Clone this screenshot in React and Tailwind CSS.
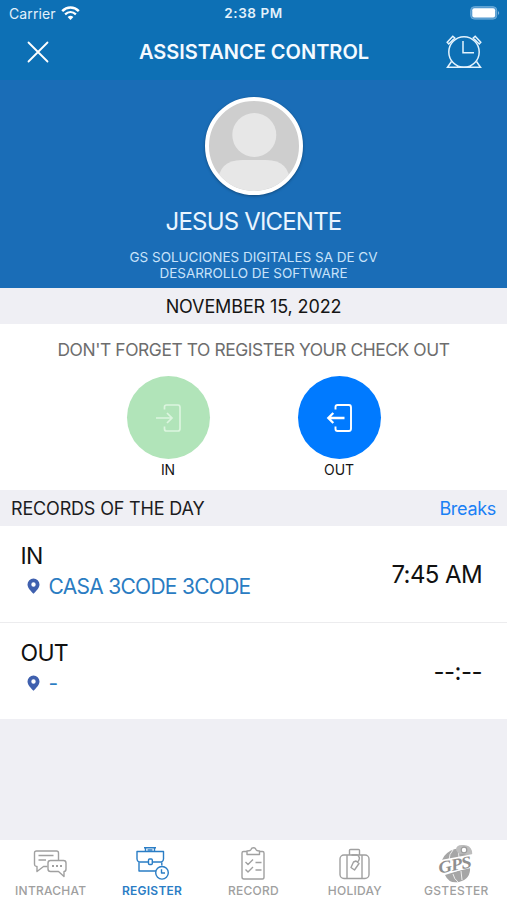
import React from 'react';

function StatusBar() {
  return (
    <div className="grid grid-cols-3 items-center h-[27px] px-[8px] text-[14px] leading-none text-[#e3f1fb]">
      <div className="flex items-center gap-[5px] pl-px">
        <span className="tracking-[0.1px]">Carrier</span>
        <svg width="19" height="15" viewBox="0 0 19 15" fill="none" stroke="#fff">
          <path d="M1.2 5.2 C6 .4 13 .4 17.8 5.2" strokeWidth="2.5" />
          <path d="M4.1 8.3 C7.3 5.3 11.7 5.3 14.9 8.3" strokeWidth="2.3" />
          <path d="M9.5 14 L6.6 11 Q9.5 8.6 12.4 11Z" fill="#fff" stroke="none" />
        </svg>
      </div>
      <span className="pt-px text-center text-[13.5px] font-semibold tracking-[0.55px]">2:38 PM</span>
      <svg className="justify-self-end -mt-px -mr-px" width="30" height="14" viewBox="0 0 30 14">
        <rect x=".7" y=".7" width="26" height="12.4" rx="3.6" fill="#4f97cf" stroke="#6fadd9" />
        <rect x="2.3" y="2.2" width="22.8" height="9.4" rx="2" fill="#fff" />
        <path d="M28 5 Q30.4 7 28 9Z" fill="#7fb3dc" />
      </svg>
    </div>
  );
}

function Header() {
  return (
    <header className="h-20 bg-[#0d70b5]">
      <StatusBar />
      <div className="flex items-center justify-between h-[50px] pl-[27px] pr-[25px]">
        <svg width="22" height="22" viewBox="0 0 22 22" stroke="#fff" strokeWidth="1.8" strokeLinecap="round">
          <path d="M1.5 1.5 L20.5 20.5 M20.5 1.5 L1.5 20.5" />
        </svg>
        <h1 className="pl-[13px] text-[20px] leading-none font-semibold tracking-[0px] text-[#f4faff]">
          ASSISTANCE CONTROL
        </h1>
        <svg width="36" height="34" viewBox="0 0 36 34" fill="none" stroke="#e4f3fd" strokeWidth="1.5">
          <circle cx="18" cy="17" r="15.2" />
          <path d="M17 6 V17.8 H28" />
          <path d="M2.8 9 L1.2 7.2 L6.8 1.2 L8.8 3 Z M33.2 9 L34.8 7.2 L29.2 1.2 L27.2 3 Z" />
          <path d="M5.5 26.5 L1.5 32.3 H11 L12 31 M30.5 26.5 L34.5 32.3 H25 L24 31 M11 32.3 H25" />
        </svg>
      </div>
    </header>
  );
}

function Profile() {
  return (
    <section className="flex flex-col items-center h-[208px] pt-[17px] bg-[#1a6db7] text-center">
      <div className="w-[98px] h-[98px] rounded-full border-[4px] border-white bg-[#cecece] overflow-hidden shadow-[0_1px_3px_rgba(0,0,0,0.35)]">
        <svg width="90" height="90" viewBox="1 1 90 90" fill="#e7e7e7">
          <circle cx="46.3" cy="35" r="22" />
          <path d="M10 84 Q10 60 34 60 H58 Q82 60 82 84 V92 H10Z" />
        </svg>
      </div>
      <h2 className="mt-[11px] text-[24px] leading-[31px] tracking-[-0.82px] text-[#eaf5ff]">JESUS VICENTE</h2>
      <p className="mt-[12px] text-[13.5px] leading-4 tracking-[-0.02px] text-[#c9e3fa]">
        GS SOLUCIONES DIGITALES SA DE CV
        <br />
        DESARROLLO DE SOFTWARE
      </p>
    </section>
  );
}

function CheckButton({ label, color, children }) {
  return (
    <div className="flex flex-col items-center w-[83px]">
      <div className={`flex items-center justify-center w-[83px] h-[83px] rounded-full ${color}`}>{children}</div>
      <span className="mt-[3px] text-[14px] leading-4 tracking-[-0.1px] text-[#151515]">{label}</span>
    </div>
  );
}

function CheckPanel() {
  return (
    <section className="h-[166px] pt-[16px] bg-white">
      <p className="text-center text-[17.4px] leading-5 tracking-[-0.41px] text-[#6d6d6d]">
        DON'T FORGET TO REGISTER YOUR CHECK OUT
      </p>
      <div className="flex justify-center gap-[88px] mt-[16px]">
        <CheckButton label="IN" color="bg-[#b1e4b9]">
          <svg width="26" height="30" viewBox="-0.5 -0.5 26 30" fill="none" stroke="#dcf5df" strokeWidth="1.7">
            <path d="M9 6 V3.5 Q9 1.5 11 1.5 H22.5 Q24.5 1.5 24.5 4 V25 Q24.5 27.5 22.5 27.5 H11 Q9 27.5 9 25.5 V23" />
            <path d="M.5 14.5 H16 M11.5 9.5 L16.5 14.5 L11.5 19.5" />
          </svg>
        </CheckButton>
        <CheckButton label="OUT" color="bg-[#007aff]">
          <svg width="26" height="30" viewBox="-0.5 -0.5 26 30" fill="none" stroke="#fff">
            <path
              d="M9 6 V3.5 Q9 1.5 11 1.5 H22.5 Q24.5 1.5 24.5 4 V25 Q24.5 27.5 22.5 27.5 H11 Q9 27.5 9 25.5 V23"
              strokeWidth="1.9"
            />
            <path d="M18 14.5 H2 M6.8 9.5 L1.8 14.5 L6.8 19.5" strokeWidth="2.3" />
          </svg>
        </CheckButton>
      </div>
    </section>
  );
}

function RecordRow({ title, place, time, timeClass }) {
  return (
    <div className="flex items-center justify-between h-24 pl-[20.5px] pr-[25px] bg-white">
      <div className="-mt-[6px]">
        <div className="text-[23px] leading-[30px] tracking-[-0.7px] text-[#111]">{title}</div>
        <div className="flex items-center gap-[9px] pl-[6px] mt-[1px]">
          <svg className="-mt-[2px]" width="13" height="16" viewBox="0 0 13 16" fill="#3f60ae">
            <path
              fillRule="evenodd"
              d="M6.5 .5 A6 6 0 0 1 12.5 6.4 C12.5 10 8.5 13.5 6.5 15.8 C4.5 13.5 .5 10 .5 6.4 A6 6 0 0 1 6.5 .5Z M6.5 4.3 A2.2 2.2 0 1 0 6.5 8.7 A2.2 2.2 0 1 0 6.5 4.3Z"
            />
          </svg>
          <span className="text-[21px] leading-[30px] tracking-[-0.72px] text-[#2a7cc2]">{place}</span>
        </div>
      </div>
      <span className={`mt-[2px] text-[24px] leading-none text-[#111] ${timeClass}`}>{time}</span>
    </div>
  );
}

function Records() {
  return (
    <section>
      <div className="flex items-center justify-between h-9 pl-[11px] pr-[11px] bg-[#efeff4] text-[18px]">
        <span className="tracking-[-0.17px] text-[#1c1c1e]">RECORDS OF THE DAY</span>
        <span className="tracking-[-0.3px] text-[#1a80f5]">Breaks</span>
      </div>
      <RecordRow title="IN" place="CASA 3CODE 3CODE" time="7:45 AM" timeClass="tracking-[-0.6px]" />
      <div className="h-px bg-[#ececee]" />
      <RecordRow title="OUT" place="-" time="--:--" timeClass="tracking-[-0.5px]" />
    </section>
  );
}

function ChatIcon() {
  return (
    <svg width="36" height="34" viewBox="-0.5 -1 36 34" fill="none" stroke="currentColor" strokeWidth="1.4" strokeLinejoin="round">
      <path d="M14 18.5 H10 L3.5 23.5 V18.5 Q1 18.5 1 16 V5 Q1 3 3 3 H23 Q25 3 25 5 V12.5" />
      <path d="M5 7.5 H20 M5 12 H12.5" />
      <path d="M17 12.5 H30 Q32.5 12.5 32.5 15 V21 Q32.5 23.5 30.5 23.5 V28.5 L25 23.5 H17 Q14.5 23.5 14.5 21 V15 Q14.5 12.5 17 12.5Z" />
      <path d="M18.5 18 H20.5 M22.5 18 H24.5 M26.5 18 H28.5" strokeWidth="2" />
    </svg>
  );
}

function BriefcaseIcon() {
  return (
    <svg width="34" height="34" viewBox="-1 0.5 34 34" fill="none" stroke="currentColor" strokeWidth="1.4" strokeLinejoin="round">
      <path d="M8 1.2 H20 M9.5 1.2 V5 M18.5 1.2 V5 M11.5 3.5 H16.5" />
      <path d="M12 15.5 H3 Q1 14.5 1 12.5 V5 H27.5 V12.5 Q27.5 14.5 25.5 15.5 H16.5" />
      <rect x="12.5" y="12.5" width="3.8" height="5.5" rx="1" />
      <path d="M3 16 V24.5 H20 M25.8 16 V19" />
      <circle cx="26" cy="26.3" r="6.3" />
      <path d="M25.5 22.8 V26.5 H29" />
    </svg>
  );
}

function ClipboardIcon() {
  return (
    <svg width="34" height="34" viewBox="-0.5 0 34 34" fill="none" stroke="currentColor" strokeWidth="1.4" strokeLinejoin="round">
      <path d="M10.5 4.5 H7 Q5.5 4.5 5.5 6 V30 Q5.5 32 7.5 32 H26 Q27.5 32 27.5 30 V6 Q27.5 4.5 26 4.5 H23" />
      <path d="M10.5 7.5 V4 Q14 4 14.5 2.5 Q15 .8 17 .8 Q19 .8 19.5 2.5 Q20 4 23 4 V7.5Z" />
      <path d="M9 15 L11.5 17.5 L16.5 12.5 M9 22.5 L11.5 25 L16.5 20 M19 15.5 H25 M19 23 H25" />
    </svg>
  );
}

function SuitcaseIcon() {
  return (
    <svg width="34" height="34" viewBox="0.5 0.5 34 34" fill="none" stroke="currentColor" strokeWidth="1.4" strokeLinejoin="round">
      <rect x="2.5" y="8.5" width="29" height="23.5" rx="4" />
      <path d="M9.5 8.5 V32 M24.5 8.5 V32" />
      <path d="M12 8.5 V3.8 Q12 3 13 3 H21 Q22 3 22 3.8 V8.5 M14 8.5 H20" />
      <path d="M20 8.5 Q24 12 19.5 16 M18.5 14.5 L21.5 17 L17 23.5 L13.5 21 L16 15.5 Z" />
    </svg>
  );
}

function GpsIcon() {
  return (
    <svg className="overflow-visible" width="44" height="40" viewBox="-4 0 44 40" fill="none" stroke="currentColor">
      <path d="M4 16 Q7 8 17 5 Q24 3 29 9 L31 12 L4 19Z" fill="#a6a6a6" stroke="none" />
      <path d="M7 31 Q20 27 32 23 Q33 35 21 38 Q11 40 7 31Z" fill="#a6a6a6" stroke="none" />
      <path d="M15 6 Q11 10 11 16 M20 5 L21 13 M15 30 Q16 35 20 38 M23 27 L24 36" stroke="#fff" strokeWidth=".8" />
      <path d="M18 6 Q18 1 24 1 Q32 0 34 7 Q35 10 33 14 Q27 9 21 10Z" fill="#bdbdbd" stroke="none" />
      <circle cx="26" cy="6" r="2.8" fill="#fff" stroke="#9b9b9b" strokeWidth="1.2" />
      <path d="M0 16.5 L35 10 V23.5 L2 31Z" fill="#fff" stroke="none" />
      <text
        transform="translate(1.5 29.5) rotate(-11) scale(1.1 1)"
        fill="#8f8f8f"
        stroke="none"
        className="font-['Liberation_Serif',serif] text-[17px] font-bold italic tracking-[-0.8px]"
      >
        GPS
      </text>
    </svg>
  );
}

const tabs = [
  { label: 'INTRACHAT', icon: <ChatIcon /> },
  { label: 'REGISTER', icon: <BriefcaseIcon />, active: true },
  { label: 'RECORD', icon: <ClipboardIcon /> },
  { label: 'HOLIDAY', icon: <SuitcaseIcon /> },
  { label: 'GSTESTER', icon: <GpsIcon /> },
];

function TabBar() {
  return (
    <nav className="grid grid-cols-5 h-[60px] bg-white">
      {tabs.map((tab) => (
        <div
          key={tab.label}
          className={`flex flex-col items-center pt-[5px] ${
            tab.active ? 'text-[#2a7dc5] font-semibold' : 'text-[#a0a0a0] font-medium'
          }`}
        >
          <div className="flex items-center justify-center h-[37px]">{tab.icon}</div>
          <span className="mt-[2px] text-[12px] leading-[13px] tracking-[0.25px]">{tab.label}</span>
        </div>
      ))}
    </nav>
  );
}

function App() {
  return (
    <div className="flex flex-col w-[507px] h-[900px] bg-[#efeff4] font-['Inter','Liberation_Sans',sans-serif] overflow-hidden">
      <Header />
      <Profile />
      <div className="flex items-center justify-center h-9 bg-[#efeff4] text-[18px] tracking-[-0.12px] text-[#151515]">
        NOVEMBER 15, 2022
      </div>
      <CheckPanel />
      <Records />
      <div className="flex-1" />
      <TabBar />
    </div>
  );
}

export default App;
